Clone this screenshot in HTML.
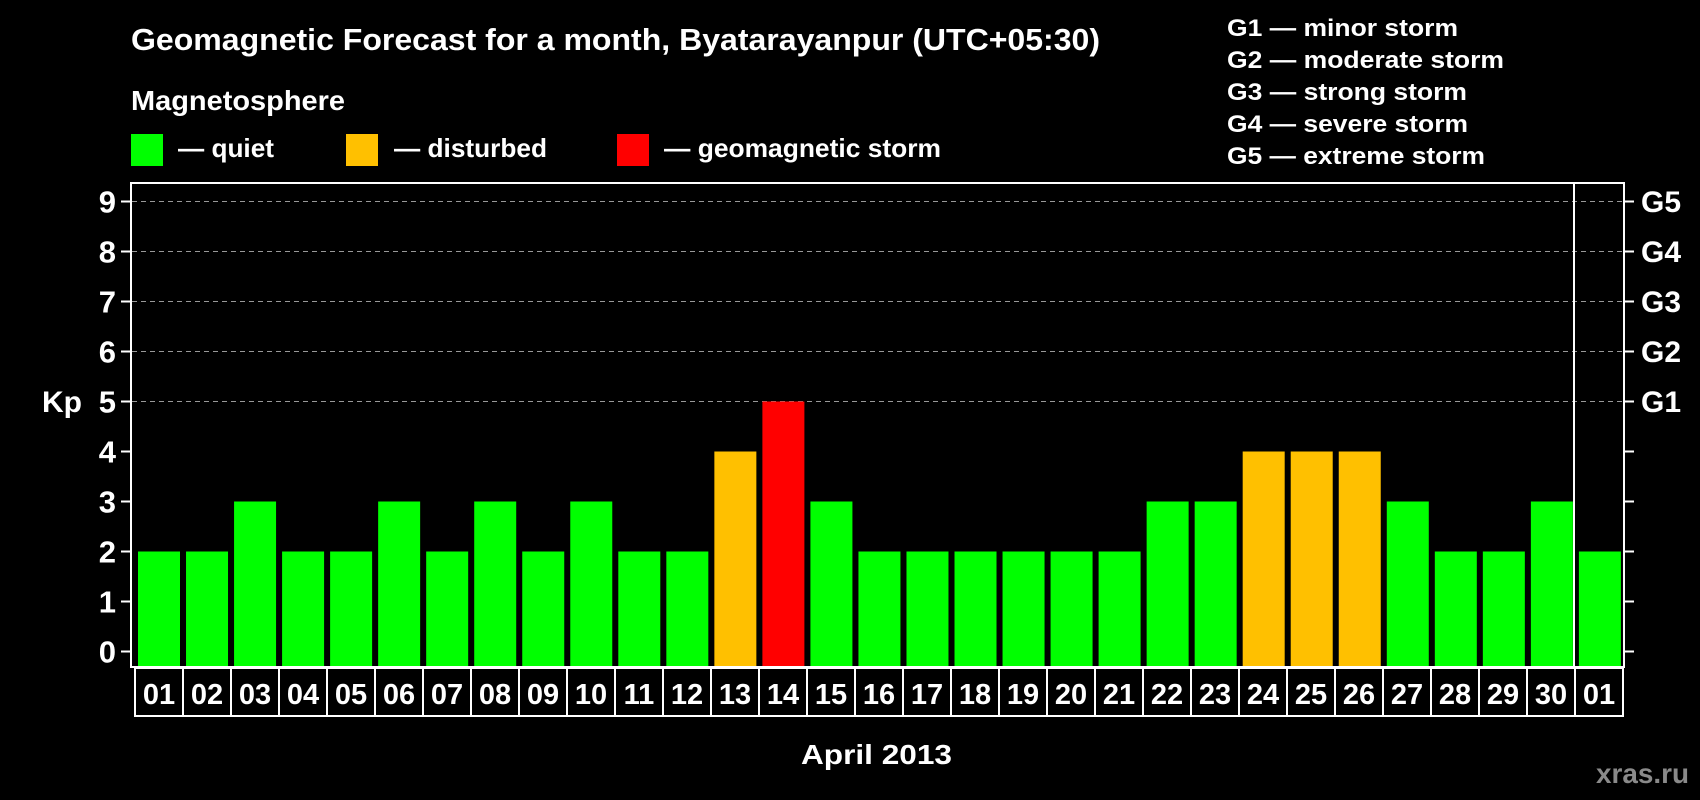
<!DOCTYPE html>
<html><head><meta charset="utf-8"><style>html,body{margin:0;padding:0;background:#000;}svg{display:block}</style></head>
<body>
<svg width="1700" height="800" viewBox="0 0 1700 800" xmlns="http://www.w3.org/2000/svg" font-family="Liberation Sans, Arial, sans-serif" font-weight="bold" fill="#fff">
<rect width="1700" height="800" fill="#000"/>
<text x="131" y="50" font-size="31" textLength="969" lengthAdjust="spacingAndGlyphs">Geomagnetic Forecast for a month, Byatarayanpur (UTC+05:30)</text>
<text x="131" y="110" font-size="28" textLength="214" lengthAdjust="spacingAndGlyphs">Magnetosphere</text>
<rect x="131" y="134" width="32" height="32" fill="#00ff00"/>
<text x="178" y="157" font-size="26" textLength="96" lengthAdjust="spacingAndGlyphs">— quiet</text>
<rect x="346" y="134" width="32" height="32" fill="#ffc000"/>
<text x="394" y="157" font-size="26" textLength="153" lengthAdjust="spacingAndGlyphs">— disturbed</text>
<rect x="617" y="134" width="32" height="32" fill="#ff0000"/>
<text x="664" y="157" font-size="26" textLength="277" lengthAdjust="spacingAndGlyphs">— geomagnetic storm</text>
<g font-size="24">
<text x="1227" y="36" textLength="231" lengthAdjust="spacingAndGlyphs">G1 — minor storm</text>
<text x="1227" y="68" textLength="277" lengthAdjust="spacingAndGlyphs">G2 — moderate storm</text>
<text x="1227" y="100" textLength="240" lengthAdjust="spacingAndGlyphs">G3 — strong storm</text>
<text x="1227" y="132" textLength="241" lengthAdjust="spacingAndGlyphs">G4 — severe storm</text>
<text x="1227" y="164" textLength="258" lengthAdjust="spacingAndGlyphs">G5 — extreme storm</text>
</g>
<g stroke="#999" stroke-width="1" stroke-dasharray="5,4">
<line x1="132" y1="201.5" x2="1624" y2="201.5"/>
<line x1="132" y1="251.5" x2="1624" y2="251.5"/>
<line x1="132" y1="301.5" x2="1624" y2="301.5"/>
<line x1="132" y1="351.5" x2="1624" y2="351.5"/>
<line x1="132" y1="401.5" x2="1624" y2="401.5"/>
</g>
<g id="bars"></g>
<g stroke="#fff" stroke-width="2" fill="none">
<rect x="131" y="183" width="1493" height="484"/>
<line x1="1574" y1="183" x2="1574" y2="667"/>
</g>
<g stroke="#fff" stroke-width="2" id="ticks"></g>
<g font-size="31" text-anchor="end" id="ylab"></g>
<text x="42" y="412" font-size="30">Kp</text>
<g font-size="30" id="glab">
<text x="1641" y="212">G5</text><text x="1641" y="262">G4</text><text x="1641" y="312">G3</text><text x="1641" y="362">G2</text><text x="1641" y="412">G1</text>
</g>
<g id="labels"></g>
<text x="801" y="764" font-size="28" textLength="151" lengthAdjust="spacingAndGlyphs">April 2013</text>
<text x="1596" y="783" font-size="28" fill="#8a8a8a" textLength="93" lengthAdjust="spacingAndGlyphs">xras.ru</text>
<script>
var d=[2,2,3,2,2,3,2,3,2,3,2,2,4,5,3,2,2,2,2,2,2,3,3,4,4,4,3,2,2,3,2];
var ns="http://www.w3.org/2000/svg";
var bars=document.getElementById('bars'),lab=document.getElementById('labels');
function el(t,a,p){var e=document.createElementNS(ns,t);for(var k in a)e.setAttribute(k,a[k]);p.appendChild(e);return e;}
d.forEach(function(v,i){
 var c=v>=5?'#ff0000':(v==4?'#ffc000':'#00ff00');
 var x=138+i*48.03, top=651.5-v*50;
 el('rect',{x:x,y:top,width:42,height:667-top,fill:c},bars);
 var bx=135+i*48;
 el('rect',{x:bx,y:668,width:48,height:48,fill:'none',stroke:'#fff','stroke-width':2},lab);
 var t=el('text',{x:bx+24,y:704,'font-size':29,'text-anchor':'middle'},lab);
 t.textContent=(i==30?'01':(i+1<10?'0'+(i+1):''+(i+1)));
});
var tk=document.getElementById('ticks'),yl=document.getElementById('ylab');
for(var k=0;k<=9;k++){var y=651.5-k*50;
 el('line',{x1:121,y1:y,x2:131,y2:y},tk);el('line',{x1:1624,y1:y,x2:1634,y2:y},tk);
 var t=el('text',{x:116,y:y+11},yl);t.textContent=k;}
</script>
</svg>
</body></html>
